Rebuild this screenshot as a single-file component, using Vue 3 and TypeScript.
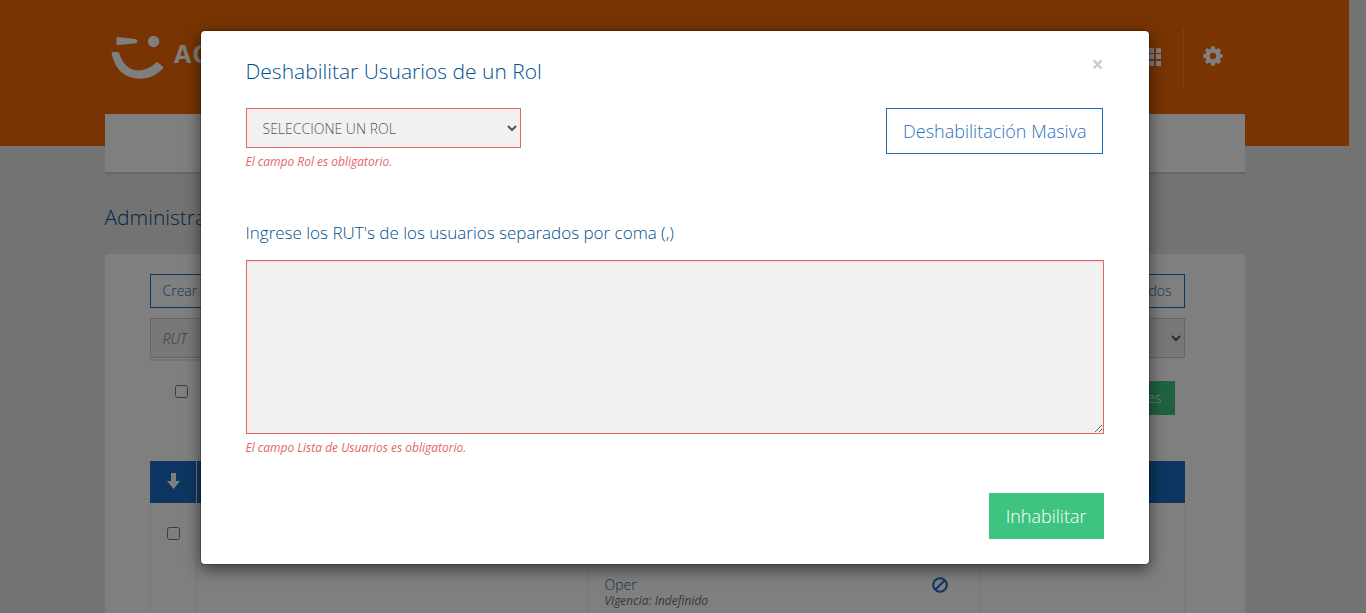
<script setup lang="ts">
import { ref } from 'vue'

const role = ref('')
const userList = ref('')
const petals: number[] = [0, 45, 90, 135]
</script>

<template>
  <div class="screen">
    <div class="page">
      <header class="top">
        <div class="container top-row">
          <div class="brand">
            <svg class="smile" width="54" height="46" viewBox="0 0 54 46">
              <path d="M5.500 3Q5.500 2 6.500 2L22 3.700Q26.500 4 26.500 6.200Q26.500 8.400 22 8.500L6.500 10.200Q5.500 10.200 5.500 9Z" fill="#fff" />
              <circle cx="42.600" cy="6.500" r="5.700" fill="#fff" />
              <path d="M1.500 17H6.500Q8 17 8.300 18.500C12 30 19 35.500 28 35.500Q38 35 45 27.500Q46 26.500 47 27.500L51.800 31.500Q52.800 32.500 51.800 33.500C46 40 38 43.700 29 43.700C14 43.500 4 35 .5 18.500Q.3 17 1.500 17Z" fill="#fff" />
            </svg>
            <span class="brand-name">AC</span>
          </div>
          <div class="tools">
            <span class="tool grid-tool">
              <svg width="19" height="18" viewBox="0 0 19 18" fill="#fff">
                <path d="M0 0h5v5H0zM7 0h5v5H7zM14 0h5v5h-5zM0 6h5v5H0zM7 6h5v5H7zM14 6h5v5h-5zM0 13h5v5H0zM7 13h5v5H7zM14 13h5v5h-5z" />
              </svg>
            </span>
            <span class="tool gear-tool">
              <svg width="20" height="20" viewBox="-10 -10 20 20">
                <g fill="#fff">
                  <path v-for="a in petals" :key="a" d="M-2.500-6.500L-1.600-9.800H1.600L2.500-6.500V6.500L1.600 9.800H-1.600L-2.500 6.500Z" :transform="`rotate(${a})`" />
                </g>
                <circle r="5.100" fill="none" stroke="#fff" stroke-width="4.400" />
                <circle r="3.200" fill="#f06806" />
              </svg>
            </span>
          </div>
        </div>
      </header>
      <nav class="container menu"></nav>
      <h1 class="container page-title">Administra</h1>
      <main class="container panel">
        <div class="row actions">
          <button class="outline">Crear</button>
          <button class="outline">ados</button>
        </div>
        <div class="row filters">
          <div class="rut-wrap"><input class="field rut" placeholder="RUT" /></div>
          <select class="field state"><option></option></select>
        </div>
        <div class="row bulk">
          <input class="check" type="checkbox" />
          <button class="green small">es</button>
        </div>
        <div class="table head">
          <div class="cell"><svg width="13" height="16" viewBox="0 0 13 16"><path d="M4 0h5v8h4l-6.500 8L0 8h4z" fill="#fff" /></svg></div>
          <div class="cell"></div><div class="cell"></div><div class="cell"></div>
        </div>
        <div class="table body">
          <div class="cell"><input class="check" type="checkbox" /></div>
          <div class="cell"></div>
          <div class="cell role-cell">
            <div><div class="role">Oper</div><div class="validity">Vigencia: Indefinido</div></div>
            <svg width="16" height="16" viewBox="0 0 16 16" fill="none" stroke="#1c6dbd" stroke-width="2.100"><circle cx="8" cy="8" r="6.800" /><path d="M3.300 12.700l9.400-9.400" /></svg>
          </div>
          <div class="cell"></div>
        </div>
      </main>
    </div>
    <div class="backdrop">
      <section class="modal" role="dialog">
        <div class="modal-head">
          <h2>Deshabilitar Usuarios de un Rol</h2>
          <button class="close" aria-label="Cerrar">×</button>
        </div>
        <div class="role-row">
          <div>
            <select v-model="role" class="field role-select invalid"><option value="">SELECCIONE UN ROL</option></select>
            <p class="error">El campo Rol es obligatorio.</p>
          </div>
          <button class="outline large">Deshabilitación Masiva</button>
        </div>
        <label class="list-label" for="users">Ingrese los RUT's de los usuarios separados por coma (,)</label>
        <textarea id="users" v-model="userList" class="invalid"></textarea>
        <p class="error">El campo Lista de Usuarios es obligatorio.</p>
        <div class="foot"><button class="green large">Inhabilitar</button></div>
      </section>
    </div>
  </div>
</template>

<style>
html, body { margin: 0; overflow: hidden; background: #e6e6e6; }
</style>
<style scoped>
* { box-sizing: border-box; }
.screen { position: relative; height: 613px; overflow: hidden; background: #e6e6e6; font: 300 14px/20px "Open Sans", sans-serif; color: #555; }
button, input, select, textarea { font: inherit; margin: 0; }
.page { width: 1349px; height: 613px; }
.container { width: 1140px; margin: 0 auto; }
.top { height: 146px; background: #f06806; }
.top-row { display: flex; justify-content: space-between; padding: 28px 0 0 6px; }
.brand { display: flex; gap: 9.500px; padding-top: 7px; }
.brand-name { font: 700 25px/36px "Open Sans", sans-serif; letter-spacing: 1px; color: #fff; }
.tools { display: flex; height: 60px; }
.tool { display: flex; align-items: center; }
.grid-tool { width: 42px; border-right: 1px solid #f58632; padding-bottom: 2px; }
.gear-tool { width: 61px; padding: 0 0 4px 19.500px; }
.menu { height: 60px; margin-top: -32px; background: #fff; border-bottom: 2px solid #cfcfcf; }
.page-title { font: 300 21px/28px "Open Sans", sans-serif; color: #00508f; padding-top: 29px; height: 80px; }
.panel { height: 380px; background: #fff; border-radius: 4px 4px 0 0; padding: 20px 60px 0 45px; }
.row { display: flex; justify-content: space-between; width: 1035px; }
.outline { height: 34px; padding: 0 12px; border: 1px solid #1c6dbd; background: #fff; color: #2b6fc0; }
.filters { margin-top: 10px; height: 43px; }
.field { height: 40px; padding: 0 12px; border: 1px solid #ccc; border-radius: 0; background: #f1f1f1; color: #555; outline: 0; }
.rut-wrap { height: 43px; border-bottom: 2px solid #eaeaea; }
.rut { width: 240px; font-style: italic; }
.rut::placeholder { color: #777; }
.state { width: 180px; padding: 0 5px 0 4px; }
.bulk { margin-top: 20px; height: 80px; padding: 0 10px 0 25px; }
.check { width: 13px; height: 13px; }
.bulk .check { margin-top: 4px; }
.green { border: 0; background: #3ec480; color: #fff; }
.small { height: 34px; padding: 0 13px; }
.table { display: grid; grid-template-columns: 47px 392px 391px 205.500px; width: 1035.500px; }
.head { height: 42px; background: #1a6ec4; }
.cell { border-right: 1px solid #f0f0f0; }
.head .cell:last-child { border-right: 0; }
.head .cell { display: flex; align-items: center; justify-content: center; padding: 0 0 2px 1px; }
.body { height: 110px; border-left: 1px solid #f0f0f0; grid-template-columns: 46px 392px 391px 205px; }
.body .check { display: block; margin: 24px 0 0 16px; }
.role-cell { display: flex; justify-content: space-between; padding: 72px 31px 0 16px; }
.role-cell svg { margin-top: 2px; }
.role { line-height: 19px; color: #1c5aa8; }
.validity { font: italic 400 12px/13px "Open Sans", sans-serif; color: #707070; }
.backdrop { position: absolute; inset: 0; background: rgba(0,0,0,.5); }
.modal { width: 950px; height: 535px; margin: 30px 0 0 199.500px; padding: 26px 45px 0 45px; background: #fff; background-clip: padding-box; border: 1px solid rgba(0,0,0,.2); border-radius: 5px; box-shadow: 0 5px 15px rgba(0,0,0,.5); }
.modal-head { display: flex; justify-content: space-between; height: 51px; }
h2 { margin: 0; font: 300 21px/28px "Open Sans", sans-serif; color: #00508f; }
.close { height: 14px; border: 0; padding: 0; background: none; font: 700 21px/14px "Open Sans", sans-serif; color: #ccc; }
.role-row { display: flex; justify-content: space-between; align-items: flex-start; height: 112px; padding-right: .5px; }
.role-select { display: block; width: 275px; }
.invalid { border: 1px solid #e46664; }
.error { margin: 5px 0 0; font: italic 400 12px/17px "Open Sans", sans-serif; color: #e46664; }
.large { height: 46px; padding: 0 15.500px 0 16.500px; font-size: 18px; }
.green.large { padding: 0 17px; }
.list-label { display: block; height: 40px; font-size: 17px; line-height: 26px; color: #00508f; }
textarea { display: block; width: 858px; height: 174px; background: #f1f1f1; border-radius: 0; outline: 0; box-shadow: inset 0 1px 1px rgba(0,0,0,.075); }
.foot { display: flex; justify-content: flex-end; margin-top: 37px; }
</style>
